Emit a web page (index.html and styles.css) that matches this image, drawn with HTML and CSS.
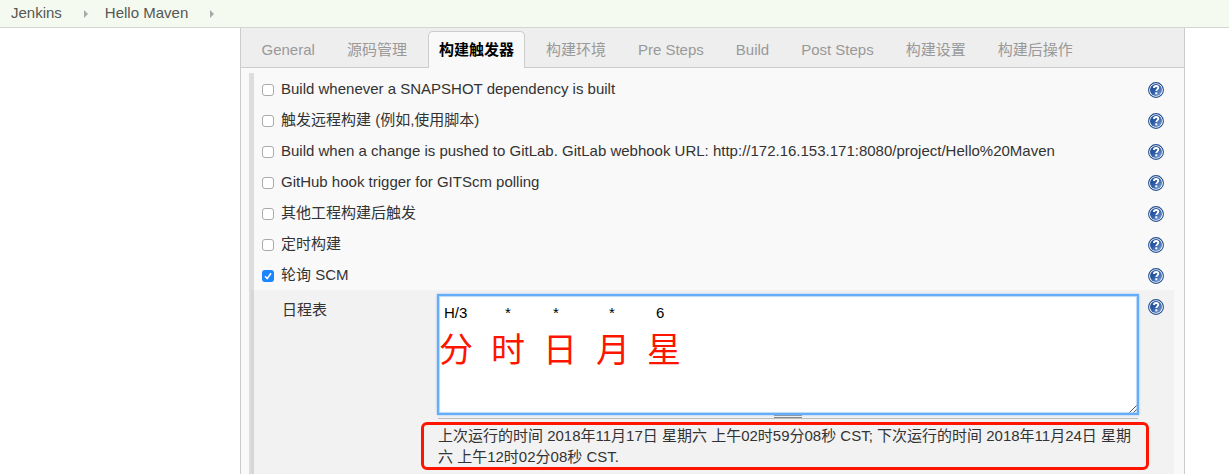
FILE: index.html
```html
<!DOCTYPE html>
<html lang="zh-CN">
<head>
<meta charset="utf-8">
<title>Hello Maven Config [Jenkins]</title>
<link rel="stylesheet" href="styles.css">
</head>
<body>
<svg class="defs" width="0" height="0" aria-hidden="true">
  <defs>
    <linearGradient id="blue" x1="0" y1="0" x2="1" y2="1">
      <stop offset="0" stop-color="#1d4a92"/><stop offset=".45" stop-color="#2c5ba6"/><stop offset="1" stop-color="#86a8dc"/>
    </linearGradient>
    <symbol id="help" viewBox="0 0 16 16">
      <circle cx="8" cy="8" r="7.4" fill="#fff" stroke="#24508f" stroke-width="1.1"/>
      <circle cx="8" cy="8" r="6" fill="url(#blue)"/>
      <path d="M5.9 6C6 4.6 6.9 4 8.1 4c1.3 0 2.2.7 2.2 1.8 0 1.5-2 1.6-2 3.2" fill="none" stroke="#fff" stroke-width="1.8"/>
      <rect x="7.3" y="10.3" width="2" height="2" fill="#fff"/>
    </symbol>
  </defs>
</svg>
<header class="breadcrumbs">
  <a>Jenkins</a><i class="arrow"></i><a>Hello Maven</a><i class="arrow"></i>
</header>
<main class="panel">
  <nav class="tabs">
    <a class="tab">General</a>
    <a class="tab">源码管理</a>
    <a class="tab active">构建触发器</a>
    <a class="tab">构建环境</a>
    <a class="tab">Pre Steps</a>
    <a class="tab">Build</a>
    <a class="tab">Post Steps</a>
    <a class="tab">构建设置</a>
    <a class="tab">构建后操作</a>
  </nav>
  <section class="config">
    <div class="row"><span class="box"></span><span class="label">Build whenever a SNAPSHOT dependency is built</span><svg class="help"><use href="#help"/></svg></div>
    <div class="row"><span class="box"></span><span class="label">触发远程构建 (例如,使用脚本)</span><svg class="help"><use href="#help"/></svg></div>
    <div class="row"><span class="box"></span><span class="label">Build when a change is pushed to GitLab. GitLab webhook URL: http://172.16.153.171:8080/project/Hello%20Maven</span><svg class="help"><use href="#help"/></svg></div>
    <div class="row"><span class="box"></span><span class="label">GitHub hook trigger for GITScm polling</span><svg class="help"><use href="#help"/></svg></div>
    <div class="row"><span class="box"></span><span class="label">其他工程构建后触发</span><svg class="help"><use href="#help"/></svg></div>
    <div class="row"><span class="box"></span><span class="label">定时构建</span><svg class="help"><use href="#help"/></svg></div>
    <div class="row"><span class="box checked"><svg viewBox="0 0 12 12"><path d="M3 6.3 5.2 8.6 9 3.2"/></svg></span><span class="label">轮询 SCM</span><svg class="help"><use href="#help"/></svg></div>
    <div class="schedule">
      <span class="schedule-label">日程表</span>
      <div class="field">
        <div class="textarea">
          <div class="cron"><span>H/3</span><span>*</span><span>*</span><span>*</span><span>6</span></div>
          <div class="units"><span>分</span><span>时</span><span>日</span><span>月</span><span>星</span></div>
          <svg class="grip" viewBox="0 0 8 8"><path d="M.5 7.5l7-7M4.5 7.5l3-3"/></svg>
        </div>
        <div class="handle"><i></i></div>
        <div class="result">上次运行的时间 2018年11月17日 星期六 上午02时59分08秒 CST; 下次运行的时间 2018年11月24日 星期<br>六 上午12时02分08秒 CST.</div>
      </div>
      <svg class="help"><use href="#help"/></svg>
    </div>
  </section>
</main>
</body>
</html>
```
FILE: styles.css
```css
* { box-sizing: border-box; }
body {
  margin: 0;
  height: 474px;
  overflow: hidden;
  background: #fff;
  color: #333;
  font: 15px/20px "Liberation Sans", "Noto Sans CJK SC", sans-serif;
}
.defs { position: absolute; }
.breadcrumbs {
  display: flex;
  align-items: center;
  height: 28px;
  padding: 0 0 2px 11px;
  background: #f4faf0;
  border-bottom: 1px solid #d3d7cf;
  color: #555753;
}
.arrow {
  margin: 2px 17px 0 22px;
  border: solid transparent;
  border-width: 4px 0 4px 4px;
  border-left-color: #aaa;
}
.panel {
  width: 945px;
  height: 446px;
  margin-left: 240px;
  border: solid #ccc;
  border-width: 0 1px;
  background: #f9f9f9;
}
.tabs {
  display: flex;
  gap: 10px;
  height: 40px;
  padding: 3px 0 0 9.5px;
  background: #eee;
  border-bottom: 1px solid #ccc;
  color: #999;
}
.tab {
  height: 37px;
  padding: 8px 10px;
  border: 1px solid transparent;
  border-bottom: 0;
  white-space: nowrap;
}
.tab.active {
  background: #f9f9f9;
  border-color: #ccc;
  border-radius: 5px 5px 0 0;
  color: #000;
  font-weight: bold;
}
.config {
  height: 401px;
  margin: 5px 10px 0 8px;
  border-left: 5px solid #ddd;
}
.row {
  display: flex;
  align-items: center;
  height: 31px;
  padding: 0 10px 0 8px;
}
.box {
  width: 12px;
  height: 12px;
  margin-top: 3px;
  border: 1px solid #aaa;
  border-radius: 3px;
  background: #fff;
}
.box.checked { background: #1a85ff; border: 0; }
.box svg { display: block; fill: none; stroke: #fff; stroke-width: 1.6; }
.label { flex: 1; margin-left: 7px; white-space: nowrap; }
.help { flex: none; width: 16px; height: 16px; }
.row .help { margin-top: 3px; }
.schedule {
  display: flex;
  height: 184px;
  margin-left: -3px;
  padding: 5px 10px 0 31px;
  background: rgba(0, 0, 0, .028);
}
.schedule-label { width: 156px; padding-top: 5px; }
.field { width: 700px; }
.textarea {
  position: relative;
  height: 119px;
  padding-top: 7px;
  background: #fff;
  border: 1px solid #65adf8;
  box-shadow: 0 0 0 1px #65adf8, 0 0 2px 1px #8fc3fa, inset 0 0 1px 1px #b9dafb;
  color: #000;
}
.cron, .units { display: grid; }
.cron { grid-template-columns: 61px 48px 56px 47px 40px; padding-left: 5px; }
.units {
  grid-template-columns: 52px 52px 53px 51px 52px;
  margin-top: 2px;
  color: #fd1500;
  font-size: 34px;
  line-height: 50px;
}
.grip {
  position: absolute;
  right: 0;
  bottom: 0;
  width: 8px;
  height: 8px;
  fill: none;
  stroke: #555;
}
.handle {
  height: 5px;
  padding: 1px 0 0 336px;
  border-bottom: 1px solid #bbb;
}
.handle i {
  display: block;
  width: 28px;
  height: 3px;
  border: solid #888;
  border-width: 1px 0;
}
.result {
  width: 728px;
  height: 48px;
  margin: 3px 0 0 -17px;
  padding: 0 0 0 14px;
  border: 3px solid #fd1500;
  border-radius: 6px;
  line-height: 21px;
  white-space: nowrap;
}
.schedule > .help { margin: 4px 0 0 10px; }
```
